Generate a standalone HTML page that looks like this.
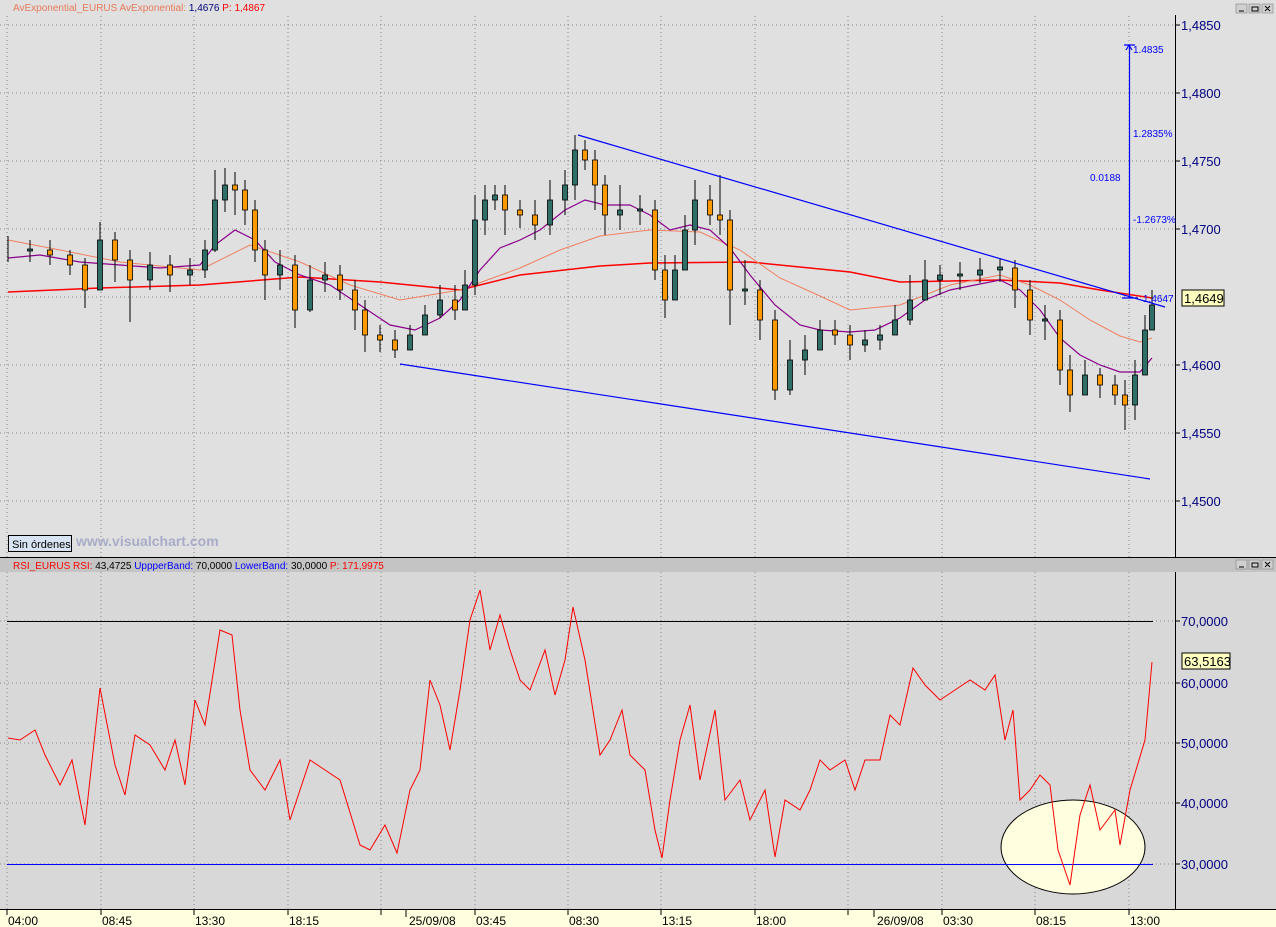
<!DOCTYPE html>
<html><head><meta charset="utf-8"><style>
html,body{margin:0;padding:0;background:#e0e0e0;width:1276px;height:927px;overflow:hidden;font-family:"Liberation Sans",sans-serif}
svg{position:absolute;left:0;top:0}
</style></head><body>
<svg width="1276" height="927" viewBox="0 0 1276 927" xmlns="http://www.w3.org/2000/svg" font-family="Liberation Sans, sans-serif">
<!-- upper pane -->
<rect x="0" y="0" width="1276" height="557" fill="#e0e0e0"/>
<text x="13" y="11" font-size="10" fill="#e87a5a">AvExponential_EURUS AvExponential: <tspan fill="#000080">1,4676</tspan> <tspan fill="#ff0000">P: 1,4867</tspan></text>
<g fill="#d0d0d0" stroke="#808080" stroke-width="0.6"><rect x="1236" y="4" width="11" height="9"/><rect x="1249" y="4" width="11" height="9"/><rect x="1262" y="4" width="11" height="9"/></g>
<g stroke="#000" stroke-width="1" fill="none"><path d="M1239 11h5M1252 7h6v4h-6zM1265 6l5 5M1270 6l-5 5"/></g>
<g stroke="#888" stroke-dasharray="1,3" stroke-width="1">
<path d="M7 16V557M101 16V557M194 16V557M288 16V557M381 16V557M475 16V557M568 16V557M661 16V557M755 16V557M848 16V557M942 16V557M1035 16V557M1129 16V557"/>
<path d="M0 25H1175M0 93H1175M0 161H1175M0 229H1175M0 297H1175M0 365H1175M0 433H1175M0 501H1175"/>
</g>
<rect x="1175" y="15" width="101" height="542" fill="#e0e0e0"/>
<path d="M1175.5 15V557" stroke="#000"/>
<g stroke="#000"><path d="M1175 25h5M1175 93h5M1175 161h5M1175 229h5M1175 365h5M1175 433h5M1175 501h5"/></g>
<g font-size="13" fill="#000080"><text x="1181" y="30">1,4850</text><text x="1181" y="98">1,4800</text><text x="1181" y="166">1,4750</text><text x="1181" y="234">1,4700</text><text x="1181" y="370">1,4600</text><text x="1181" y="438">1,4550</text><text x="1181" y="506">1,4500</text></g>
<rect x="1182" y="290" width="42" height="16" fill="#ffffc0" stroke="#000"/>
<text x="1184" y="303" font-size="13" fill="#000">1,4649</text>
<!-- moving averages -->
<polyline fill="none" stroke="#ff0000" stroke-width="1.5" points="8,292 100,288 200,285 300,277 380,282 460,290 520,275 600,266 650,263 750,262 850,272 900,282 1000,280 1060,283 1100,290 1152,298"/>
<polyline fill="none" stroke="#f08060" stroke-width="1" points="8,240 60,250 120,262 200,270 250,245 300,262 350,285 400,300 460,290 520,268 560,250 600,236 650,230 700,232 740,250 780,278 820,296 850,310 900,305 950,285 1000,275 1030,285 1060,300 1090,320 1120,336 1140,342 1152,338"/>
<polyline fill="none" stroke="#8b008b" stroke-width="1.2" points="8,258 40,255 80,262 120,265 160,268 200,265 215,245 235,230 255,240 275,262 300,275 330,285 360,305 390,325 415,330 440,318 460,300 480,270 500,248 520,240 540,230 565,210 585,200 605,205 630,205 650,215 670,230 690,225 710,230 730,248 750,275 775,305 800,325 820,330 850,332 875,330 900,318 925,300 950,290 975,285 1000,280 1020,290 1040,310 1060,338 1080,355 1100,365 1120,372 1140,372 1152,358"/>
<!-- candles wicks -->
<path stroke="#000" stroke-width="1" fill="none" d="M8 236V262M30 240V262M50 240V265M70 250V275M85 258V308M100 222V268M115 232V282M130 250V322M150 252V290M170 255V292M190 258V285M205 240V278M215 170V252M225 168V212M235 172V215M245 180V225M255 200V262M265 240V300M280 250V290M295 255V328M310 265V312M325 262V292M340 265V300M355 280V330M365 300V352M380 325V352M395 330V358M410 325V345M425 305V330M440 285V318M455 285V320M465 270V300M475 195V295M485 185V235M495 185V210M505 185V235M520 200V228M535 200V240M550 180V235M565 170V215M575 135V200M585 140V170M595 150V210M605 175V235M620 185V230M640 195V225M655 200V280M665 255V318M675 255V290M685 215V255M695 180V245M710 185V225M720 175V235M730 210V325M745 260V305M760 280V340M775 310V400M790 340V395M805 335V375M820 320V345M835 320V345M850 325V360M865 330V352M880 325V350M895 305V335M910 275V325M925 260V300M940 265V295M960 262V290M980 258V283M1000 258V282M1015 260V308M1030 280V335M1045 305V340M1060 310V385M1070 355V412M1085 360V395M1100 368V398M1115 375V405M1125 380V430M1135 360V420M1145 315V375M1152 290V322"/>
<g stroke="#000" stroke-width="0.8" fill="#2f6f68">
<rect x="27.5" y="249" width="5" height="2"/><rect x="97.5" y="240" width="5" height="50"/><rect x="147.5" y="265" width="5" height="15"/><rect x="187.5" y="270" width="5" height="5"/><rect x="202.5" y="250" width="5" height="20"/><rect x="212.5" y="200" width="5" height="50"/><rect x="222.5" y="185" width="5" height="15"/><rect x="277.5" y="265" width="5" height="10"/><rect x="307.5" y="280" width="5" height="30"/><rect x="322.5" y="275" width="5" height="5"/><rect x="407.5" y="335" width="5" height="15"/><rect x="422.5" y="315" width="5" height="20"/><rect x="437.5" y="300" width="5" height="15"/><rect x="462.5" y="285" width="5" height="25"/><rect x="472.5" y="220" width="5" height="65"/><rect x="482.5" y="200" width="5" height="20"/><rect x="492.5" y="195" width="5" height="5"/><rect x="547.5" y="200" width="5" height="25"/><rect x="562.5" y="185" width="5" height="15"/><rect x="572.5" y="150" width="5" height="35"/><rect x="617.5" y="210" width="5" height="5"/><rect x="637.5" y="209" width="5" height="2"/><rect x="672.5" y="270" width="5" height="30"/><rect x="682.5" y="230" width="5" height="40"/><rect x="692.5" y="200" width="5" height="30"/><rect x="742.5" y="289" width="5" height="2"/><rect x="787.5" y="360" width="5" height="30"/><rect x="802.5" y="350" width="5" height="10"/><rect x="817.5" y="330" width="5" height="20"/><rect x="862.5" y="340" width="5" height="5"/><rect x="877.5" y="335" width="5" height="5"/><rect x="892.5" y="320" width="5" height="15"/><rect x="907.5" y="300" width="5" height="20"/><rect x="922.5" y="280" width="5" height="20"/><rect x="937.5" y="275" width="5" height="5"/><rect x="957.5" y="274" width="5" height="2"/><rect x="977.5" y="270" width="5" height="5"/><rect x="997.5" y="267" width="5" height="3"/><rect x="1042.5" y="319" width="5" height="2"/><rect x="1082.5" y="375" width="5" height="20"/><rect x="1132.5" y="375" width="5" height="30"/><rect x="1142.5" y="330" width="5" height="45"/><rect x="1149.5" y="305" width="5" height="25"/>
</g>
<g stroke="#000" stroke-width="0.8" fill="#ff9900">
<rect x="47.5" y="250" width="5" height="5"/><rect x="67.5" y="255" width="5" height="10"/><rect x="82.5" y="265" width="5" height="25"/><rect x="112.5" y="240" width="5" height="20"/><rect x="127.5" y="260" width="5" height="20"/><rect x="167.5" y="265" width="5" height="10"/><rect x="232.5" y="185" width="5" height="5"/><rect x="242.5" y="190" width="5" height="20"/><rect x="252.5" y="210" width="5" height="40"/><rect x="262.5" y="250" width="5" height="25"/><rect x="292.5" y="265" width="5" height="45"/><rect x="337.5" y="275" width="5" height="15"/><rect x="352.5" y="290" width="5" height="20"/><rect x="362.5" y="310" width="5" height="25"/><rect x="377.5" y="335" width="5" height="5"/><rect x="392.5" y="340" width="5" height="10"/><rect x="452.5" y="300" width="5" height="10"/><rect x="502.5" y="195" width="5" height="15"/><rect x="517.5" y="210" width="5" height="5"/><rect x="532.5" y="215" width="5" height="10"/><rect x="582.5" y="150" width="5" height="10"/><rect x="592.5" y="160" width="5" height="25"/><rect x="602.5" y="185" width="5" height="30"/><rect x="652.5" y="210" width="5" height="60"/><rect x="662.5" y="270" width="5" height="30"/><rect x="707.5" y="200" width="5" height="15"/><rect x="717.5" y="215" width="5" height="5"/><rect x="727.5" y="220" width="5" height="70"/><rect x="757.5" y="290" width="5" height="30"/><rect x="772.5" y="320" width="5" height="70"/><rect x="832.5" y="330" width="5" height="5"/><rect x="847.5" y="335" width="5" height="10"/><rect x="1012.5" y="268" width="5" height="22"/><rect x="1027.5" y="290" width="5" height="30"/><rect x="1057.5" y="320" width="5" height="50"/><rect x="1067.5" y="370" width="5" height="25"/><rect x="1097.5" y="375" width="5" height="10"/><rect x="1112.5" y="385" width="5" height="10"/><rect x="1122.5" y="395" width="5" height="10"/>
</g>
<!-- trendlines -->
<g stroke="#0000ff" stroke-width="1.2" fill="none">
<path d="M578 135L1165 307M400 364L1150 479M1129.5 298V45M1124 45h11M1129 45l-3 5M1129 45l3 5M1122 298h16"/>
</g>
<g font-size="10" fill="#0000ff"><text x="1133" y="53">1.4835</text><text x="1133" y="137">1.2835%</text><text x="1090" y="181">0.0188</text><text x="1133" y="223">-1.2673%</text><text x="1143" y="302">1.4647</text></g>
<rect x="8.5" y="535.5" width="63" height="16" fill="#d8e4f4" stroke="#000"/>
<text x="12" y="548" font-size="11" fill="#000">Sin órdenes</text>
<text x="76" y="546" font-size="14" font-weight="bold" fill="#a8acc8">www.visualchart.com</text>
<!-- lower pane -->
<path d="M0 557.5H1276" stroke="#000"/>
<rect x="0" y="558" width="1276" height="14" fill="#c4c4c4"/>
<text x="13" y="569" font-size="10" fill="#ff0000">RSI_EURUS RSI: <tspan fill="#000">43,4725</tspan> <tspan fill="#0000ff">UppperBand:</tspan> <tspan fill="#000">70,0000</tspan> <tspan fill="#0000ff">LowerBand:</tspan> <tspan fill="#000">30,0000</tspan> P: 171,9975</text>
<g fill="#d0d0d0" stroke="#808080" stroke-width="0.6"><rect x="1236" y="560" width="11" height="9"/><rect x="1249" y="560" width="11" height="9"/><rect x="1262" y="560" width="11" height="9"/></g>
<g stroke="#000" stroke-width="1" fill="none"><path d="M1239 567h5M1252 563h6v4h-6zM1265 562l5 5M1270 562l-5 5"/></g>
<rect x="0" y="572" width="1276" height="337" fill="#d8d8d8"/>
<g stroke="#888" stroke-dasharray="1,3" stroke-width="1">
<path d="M7 572V909M101 572V909M194 572V909M288 572V909M381 572V909M475 572V909M568 572V909M661 572V909M755 572V909M848 572V909M942 572V909M1035 572V909M1129 572V909"/>
<path d="M0 621H1175M0 683H1175M0 743H1175M0 803H1175M0 864H1175"/>
</g>
<ellipse cx="1073" cy="847" rx="72" ry="47" fill="#ffffe0" stroke="#000"/>
<path d="M7 621.5H1153" stroke="#000"/>
<path d="M7 864.5H1153" stroke="#0000ff"/>
<polyline fill="none" stroke="#ff0000" stroke-width="1" points="8,738 20,740 35,730 45,755 60,785 72,760 85,825 100,688 115,765 125,795 135,735 150,745 165,770 175,740 185,785 195,700 205,725 220,630 232,635 240,710 250,770 265,790 280,760 290,820 310,760 325,770 340,780 360,845 370,850 385,825 397,853 410,790 420,770 430,680 440,705 450,750 460,690 470,620 480,590 490,650 500,615 510,650 520,680 530,690 545,650 555,695 565,660 573,607 585,660 600,755 610,740 622,710 630,755 645,770 655,830 662,858 670,800 680,740 690,705 700,780 715,710 725,800 740,780 750,820 765,790 775,857 785,800 800,810 810,790 820,760 830,770 845,760 855,790 865,760 880,760 890,715 900,725 913,668 925,685 940,700 955,690 970,680 985,690 995,675 1005,740 1013,710 1020,800 1030,790 1040,775 1050,785 1058,850 1070,885 1080,815 1090,785 1100,830 1115,810 1120,845 1130,790 1145,740 1152,662"/>
<rect x="1175" y="572" width="101" height="337" fill="#d8d8d8"/>
<path d="M1175.5 572V909" stroke="#000"/>
<g stroke="#000"><path d="M1175 621h5M1175 683h5M1175 743h5M1175 803h5M1175 864h5"/></g>
<g font-size="13" fill="#000080"><text x="1181" y="626">70,0000</text><text x="1181" y="688">60,0000</text><text x="1181" y="748">50,0000</text><text x="1181" y="808">40,0000</text><text x="1181" y="869">30,0000</text></g>
<rect x="1182" y="653" width="48" height="16" fill="#ffffc0" stroke="#000"/>
<text x="1184" y="666" font-size="13" fill="#000">63,5163</text>
<!-- time axis -->
<rect x="0" y="909" width="1276" height="18" fill="#ffffe0"/>
<path d="M0 909.5H1276" stroke="#000"/>
<g stroke="#000"><path d="M7 909v6M101 909v6M194 909v6M288 909v6M381 909v6M406 909v8M475 909v6M568 909v6M661 909v6M755 909v6M848 909v6M874 909v8M942 909v6M1035 909v6M1129 909v6"/></g>
<g font-size="12" fill="#000"><text x="8" y="925">04:00</text><text x="102" y="925">08:45</text><text x="195" y="925">13:30</text><text x="289" y="925">18:15</text><text x="409" y="925">25/09/08</text><text x="476" y="925">03:45</text><text x="569" y="925">08:30</text><text x="662" y="925">13:15</text><text x="756" y="925">18:00</text><text x="877" y="925">26/09/08</text><text x="943" y="925">03:30</text><text x="1036" y="925">08:15</text><text x="1130" y="925">13:00</text></g>
</svg>
</body></html>
